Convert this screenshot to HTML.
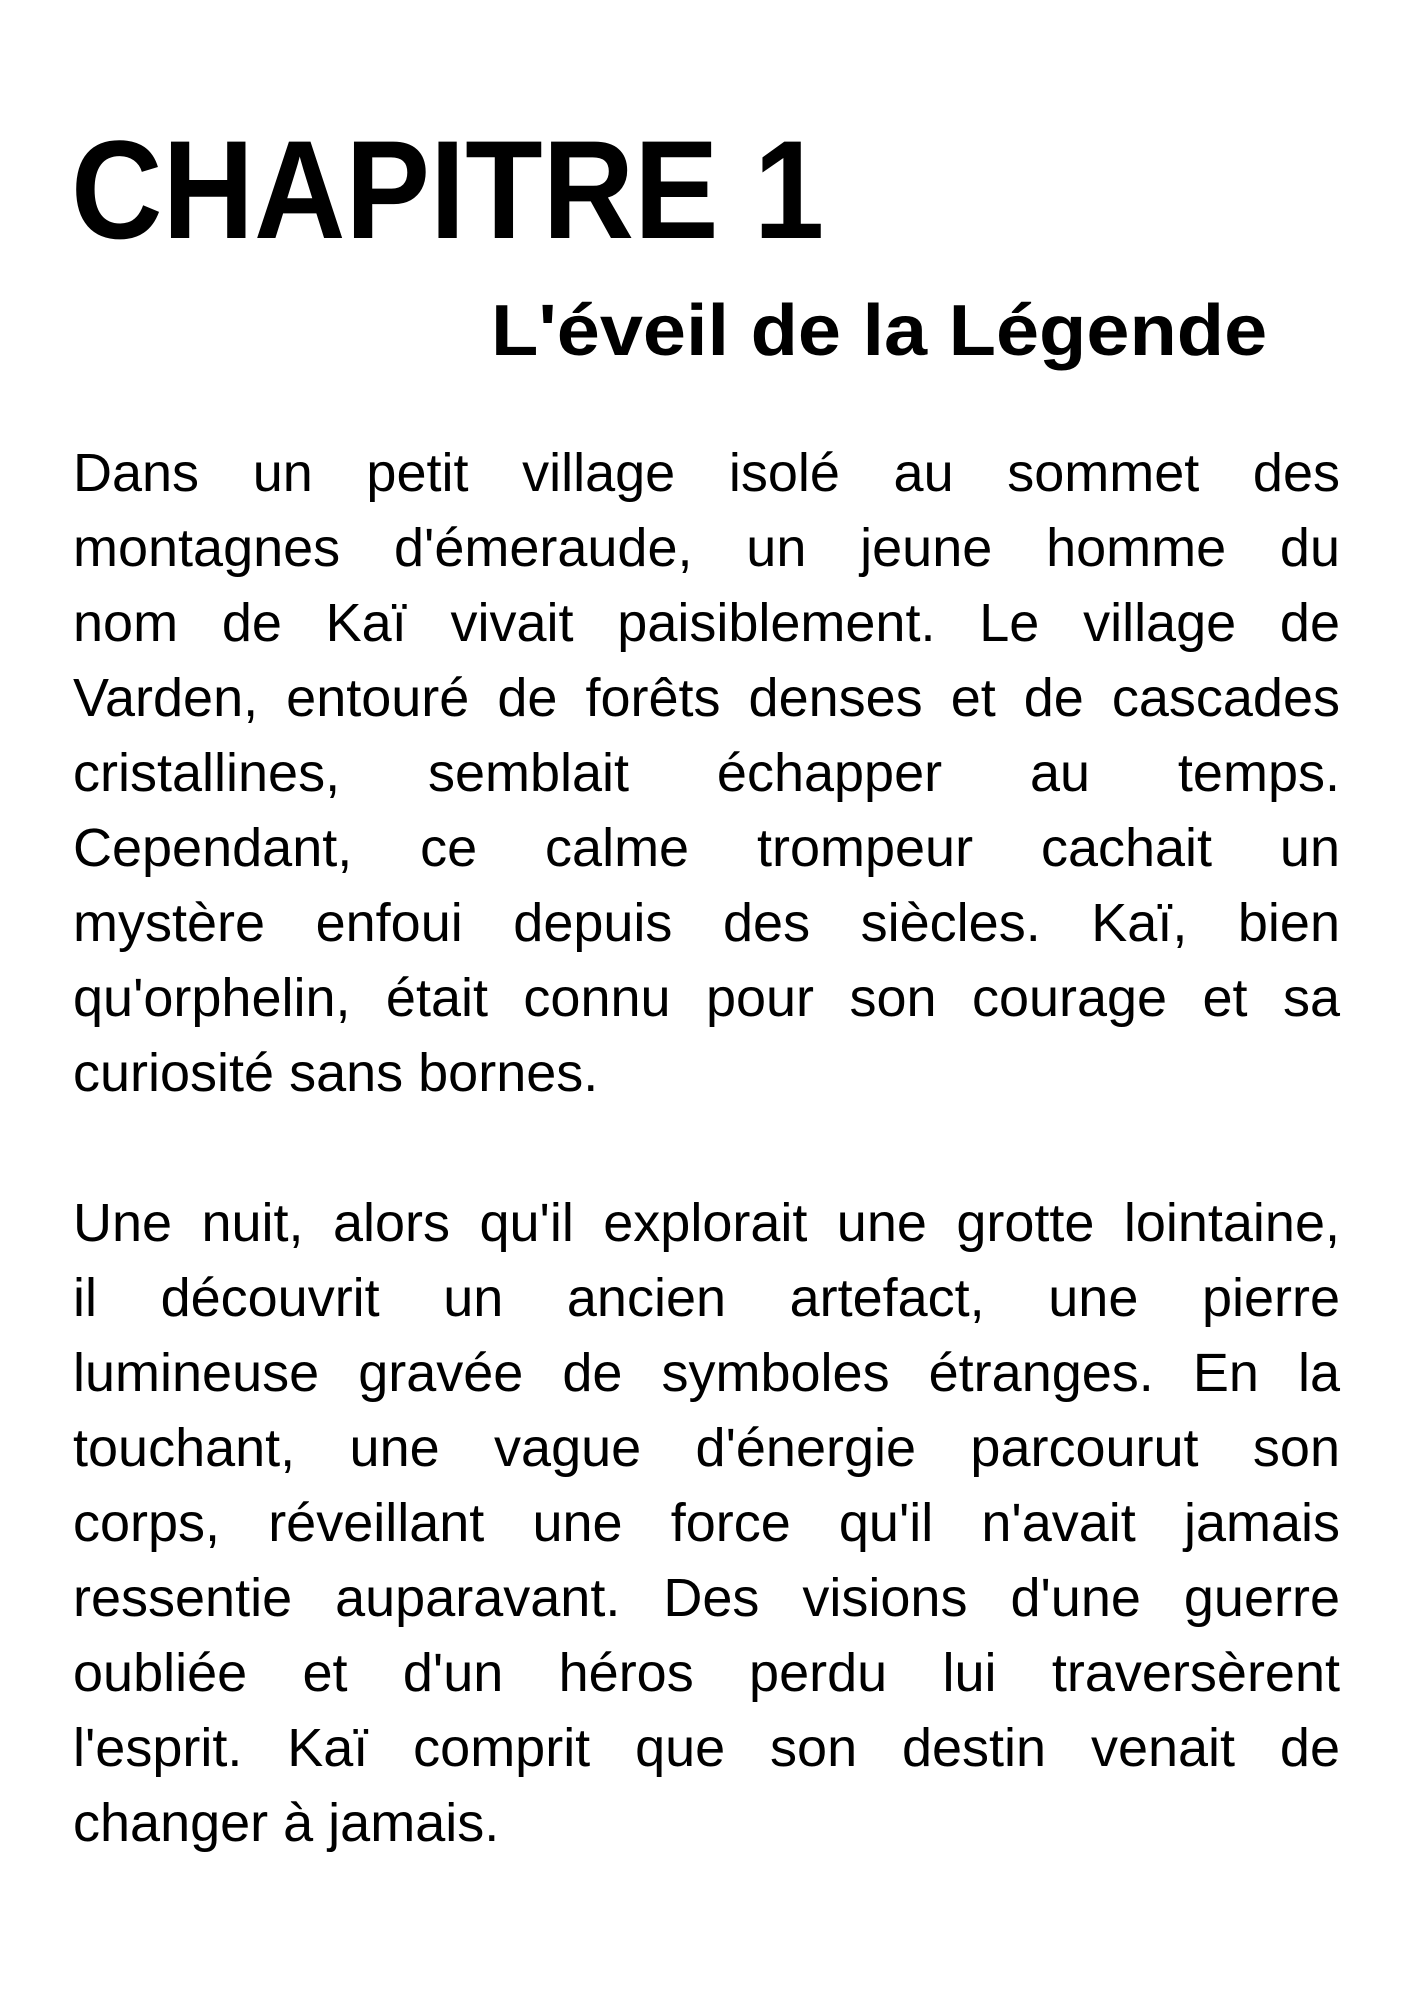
<!DOCTYPE html>
<html><head><meta charset="utf-8"><style>
html,body{margin:0;padding:0;background:#fff;}
body{width:1414px;height:2000px;position:relative;overflow:hidden;font-family:"Liberation Sans",sans-serif;color:#000;}
#h1{position:absolute;left:71px;top:120px;font-size:140px;line-height:140px;font-weight:bold;white-space:nowrap;transform:scaleX(0.905);transform-origin:0 0;}
#h2{position:absolute;left:491px;top:295px;font-size:72px;line-height:72px;font-weight:bold;white-space:nowrap;transform:scaleX(1.076);transform-origin:0 0;}
.p{position:absolute;left:73px;width:1267px;font-size:54px;}
.p div{height:75px;line-height:75px;text-align:justify;text-align-last:justify;white-space:nowrap;}
.p div.l{text-align-last:left;}
</style></head><body>
<div id="h1">CHAPITRE 1</div>
<div id="h2">L'éveil de la Légende</div>
<div class="p" style="top:436px">
<div>Dans un petit village isolé au sommet des</div>
<div>montagnes d'émeraude, un jeune homme du</div>
<div>nom de Kaï vivait paisiblement. Le village de</div>
<div>Varden, entouré de forêts denses et de cascades</div>
<div>cristallines, semblait échapper au temps.</div>
<div>Cependant, ce calme trompeur cachait un</div>
<div>mystère enfoui depuis des siècles. Kaï, bien</div>
<div>qu'orphelin, était connu pour son courage et sa</div>
<div class="l">curiosité sans bornes.</div>
</div>
<div class="p" style="top:1186px">
<div>Une nuit, alors qu'il explorait une grotte lointaine,</div>
<div>il découvrit un ancien artefact, une pierre</div>
<div>lumineuse gravée de symboles étranges. En la</div>
<div>touchant, une vague d'énergie parcourut son</div>
<div>corps, réveillant une force qu'il n'avait jamais</div>
<div>ressentie auparavant. Des visions d'une guerre</div>
<div>oubliée et d'un héros perdu lui traversèrent</div>
<div>l'esprit. Kaï comprit que son destin venait de</div>
<div class="l">changer à jamais.</div>
</div>
</body></html>
